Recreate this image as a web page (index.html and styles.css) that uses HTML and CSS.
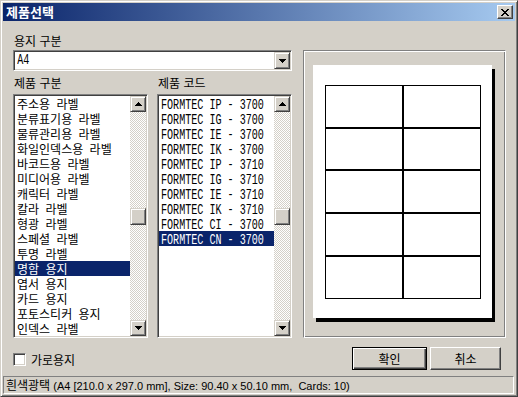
FILE: index.html
```html
<!DOCTYPE html>
<html lang="ko">
<head>
    <meta charset="UTF-8">
    <title>제품선택</title>
    <link rel="stylesheet" href="styles.css">
</head>
<body>
    <!-- 대화상자 -->
    <div class="window">
        <div class="titlebar">
            <span class="title">제품선택</span>
            <span class="close">
                <svg width="8" height="7" viewBox="0 0 8 7"><path d="M0 0h2v1h1v1h2V1h1V0h2v1H7v1H6v1H5v1h1v1h1v1h1v1H6V6H5V5H3v1H2v1H0V6h1V5h1V4h1V3H2V2H1V1H0z" fill="#000"/></svg>
            </span>
        </div>

        <div class="body">
            <div class="main">
                <!-- 왼쪽: 용지 / 제품 선택 -->
                <div class="left">
                    <div class="label">용지 구분</div>
                    <div class="combo">
                        <span class="combo-text">A4</span>
                        <span class="sbtn">
                            <svg width="7" height="4" viewBox="0 0 7 4"><path d="M0 0h7v1H6v1H5v1H4v1H3V3H2V2H1V1H0z" fill="#000"/></svg>
                        </span>
                    </div>

                    <div class="lists">
                        <div class="col">
                            <div class="label">제품 구분</div>
                            <div class="listbox">
                                <ul class="items">
                                    <li>주소용 라벨</li>
                                    <li>분류표기용 라벨</li>
                                    <li>물류관리용 라벨</li>
                                    <li>화일인덱스용 라벨</li>
                                    <li>바코드용 라벨</li>
                                    <li>미디어용 라벨</li>
                                    <li>캐릭터 라벨</li>
                                    <li>칼라 라벨</li>
                                    <li>형광 라벨</li>
                                    <li>스페셜 라벨</li>
                                    <li>투명 라벨</li>
                                    <li class="selected">명함 용지</li>
                                    <li>엽서 용지</li>
                                    <li>카드 용지</li>
                                    <li>포토스티커 용지</li>
                                    <li>인덱스 라벨</li>
                                </ul>
                                <div class="scrollbar">
                                    <span class="sbtn"><svg width="7" height="4" viewBox="0 0 7 4"><path d="M3 0h1v1h1v1h1v1h1v1H0V3h1V2h1V1h1z" fill="#000"/></svg></span>
                                    <div class="track"><span class="thumb"></span></div>
                                    <span class="sbtn"><svg width="7" height="4" viewBox="0 0 7 4"><path d="M0 0h7v1H6v1H5v1H4v1H3V3H2V2H1V1H0z" fill="#000"/></svg></span>
                                </div>
                            </div>
                        </div>

                        <div class="col">
                            <div class="label">제품 코드</div>
                            <div class="listbox">
                                <ul class="items codes">
                                    <li><span>FORMTEC IP - 3700</span></li>
                                    <li><span>FORMTEC IG - 3700</span></li>
                                    <li><span>FORMTEC IE - 3700</span></li>
                                    <li><span>FORMTEC IK - 3700</span></li>
                                    <li><span>FORMTEC IP - 3710</span></li>
                                    <li><span>FORMTEC IG - 3710</span></li>
                                    <li><span>FORMTEC IE - 3710</span></li>
                                    <li><span>FORMTEC IK - 3710</span></li>
                                    <li><span>FORMTEC CI - 3700</span></li>
                                    <li class="selected"><span>FORMTEC CN - 3700</span></li>
                                </ul>
                                <div class="scrollbar">
                                    <span class="sbtn"><svg width="7" height="4" viewBox="0 0 7 4"><path d="M3 0h1v1h1v1h1v1h1v1H0V3h1V2h1V1h1z" fill="#000"/></svg></span>
                                    <div class="track"><span class="thumb"></span></div>
                                    <span class="sbtn"><svg width="7" height="4" viewBox="0 0 7 4"><path d="M0 0h7v1H6v1H5v1H4v1H3V3H2V2H1V1H0z" fill="#000"/></svg></span>
                                </div>
                            </div>
                        </div>
                    </div>
                </div>

                <!-- 오른쪽: 미리보기 -->
                <div class="right">
                    <div class="frame">
                        <div class="paper">
                            <div class="sheet">
                                <div class="cell"></div><div class="cell"></div>
                                <div class="cell"></div><div class="cell"></div>
                                <div class="cell"></div><div class="cell"></div>
                                <div class="cell"></div><div class="cell"></div>
                                <div class="cell"></div><div class="cell"></div>
                            </div>
                        </div>
                    </div>
                </div>
            </div>

            <!-- 하단 버튼 -->
            <div class="footer">
                <label class="check"><span class="box"></span>가로용지</label>
                <div class="buttons">
                    <button class="btn default">확인</button>
                    <button class="btn cancel">취소</button>
                </div>
            </div>
        </div>

        <!-- 상태 표시줄 -->
        <div class="status"><span class="ko">흰색광택</span> (A4 [210.0 x 297.0 mm], Size: 90.40 x 50.10 mm,&nbsp; Cards: 10)</div>
    </div>
</body>
</html>
```

FILE: styles.css
```css
/* 기본 */
body {
    margin: 0;
    background-color: #d4d0c8;
    font-family: "Noto Sans CJK KR", "Liberation Sans", sans-serif;
    font-size: 12px;
    color: #000;
}

/* 창 테두리 */
.window {
    box-sizing: border-box;
    width: 518px;
    height: 397px;
    padding: 2px;
    background-color: #d4d0c8;
    border: 1px solid;
    border-color: #d4d0c8 #404040 #404040 #d4d0c8;
    box-shadow: inset 1px 1px #fff, inset -1px -1px #808080;
    display: flex;
    flex-direction: column;
}

/* 제목 표시줄 */
.titlebar {
    height: 18px;
    background: linear-gradient(90deg, #0a246a, #a6caf0);
    display: flex;
    align-items: center;
    justify-content: space-between;
}

.title {
    color: #fff;
    font-weight: bold;
    font-size: 13px;
    padding-left: 3px;
    line-height: 18px;
}

.close {
    box-sizing: border-box;
    width: 16px;
    height: 14px;
    margin-right: 2px;
    display: flex;
    align-items: center;
    justify-content: center;
    background-color: #d4d0c8;
    border: 1px solid;
    border-color: #fff #404040 #404040 #fff;
    box-shadow: inset -1px -1px #808080;
}

/* 본문 */
.body {
    flex: 1;
    padding: 12px 10px 0;
}

.main {
    display: flex;
    gap: 11px;
}

.left {
    width: 279px;
}

.label {
    height: 15px;
    line-height: 15px;
    padding-left: 1px;
}

/* 콤보박스 */
.combo {
    box-sizing: border-box;
    height: 21px;
    margin-top: 2px;
    background-color: #fff;
    border: 1px solid;
    border-color: #808080 #fff #fff #808080;
    box-shadow: inset 1px 1px #404040, inset -1px -1px #d4d0c8;
    padding: 1px;
    display: flex;
    justify-content: space-between;
}

.combo-text {
    font-family: "Liberation Mono", monospace;
    font-size: 14px;
    line-height: 17px;
    padding-left: 3px;
    display: inline-block;
    transform: scaleX(0.72);
    transform-origin: left center;
}

/* 스크롤 버튼 */
.sbtn {
    box-sizing: border-box;
    width: 16px;
    height: 17px;
    flex: none;
    display: flex;
    align-items: center;
    justify-content: center;
    background-color: #d4d0c8;
    border: 1px solid;
    border-color: #d4d0c8 #404040 #404040 #d4d0c8;
    box-shadow: inset 1px 1px #fff, inset -1px -1px #808080;
}

/* 목록 */
.lists {
    display: flex;
    gap: 9px;
    margin-top: 4px;
}

.col .label {
    margin-bottom: 4px;
}

.listbox {
    box-sizing: border-box;
    width: 135px;
    height: 244px;
    background-color: #fff;
    border: 1px solid;
    border-color: #808080 #fff #fff #808080;
    box-shadow: inset 1px 1px #404040, inset -1px -1px #d4d0c8;
    padding: 1px;
    display: flex;
}

.items {
    flex: 1;
    list-style: none;
    margin: 0;
    padding: 0;
    overflow: hidden;
}

.items li {
    height: 15px;
    line-height: 15px;
    padding-left: 2px;
    white-space: nowrap;
    word-spacing: 3px;
}

.items li.selected {
    background-color: #0a246a;
    color: #fff;
}

.codes li span {
    display: inline-block;
    font-family: "Liberation Mono", monospace;
    font-size: 14px;
    word-spacing: 0;
    transform: scaleX(0.72);
    transform-origin: left center;
}

.scrollbar {
    width: 16px;
    display: flex;
    flex-direction: column;
}

.scrollbar .sbtn {
    height: 16px;
}

.track {
    flex: 1;
    background: repeating-conic-gradient(#fff 0 25%, #d4d0c8 0 50%) 0 0 / 2px 2px;
}

.thumb {
    display: block;
    box-sizing: border-box;
    height: 17px;
    margin-top: 96px;
    background-color: #d4d0c8;
    border: 1px solid;
    border-color: #d4d0c8 #404040 #404040 #d4d0c8;
    box-shadow: inset 1px 1px #fff, inset -1px -1px #808080;
}

/* 미리보기 */
.right {
    padding-top: 17px;
}

.frame {
    box-sizing: border-box;
    width: 203px;
    height: 288px;
    border: 1px solid;
    border-color: #808080 #fff #fff #808080;
    box-shadow: inset 1px 1px #fff, inset -1px -1px #808080;
    padding: 14px 0 0 9px;
}

.paper {
    box-sizing: border-box;
    width: 179px;
    height: 253px;
    background-color: #fff;
    box-shadow: 3px 4px 0 #000;
    padding: 20px 0 0 12px;
}

.sheet {
    display: grid;
    grid-template-columns: 78px 78px;
    grid-template-rows: 43px 42px 43px 43px 43px;
}

.cell {
    border: 1px solid #000;
}

/* 하단 */
.footer {
    display: flex;
    justify-content: space-between;
    margin-top: 9px;
    height: 23px;
}

.check {
    display: flex;
    align-items: center;
    gap: 5px;
    margin-top: 6px;
    height: 13px;
}

.box {
    box-sizing: border-box;
    width: 13px;
    height: 13px;
    background-color: #fff;
    border: 1px solid;
    border-color: #808080 #fff #fff #808080;
    box-shadow: inset 1px 1px #404040, inset -1px -1px #d4d0c8;
}

.buttons {
    display: flex;
    gap: 3px;
    margin-right: 4px;
}

.btn {
    box-sizing: border-box;
    height: 23px;
    padding: 0;
    font-family: inherit;
    font-size: 12px;
    color: #000;
    background-color: #d4d0c8;
    border: 1px solid;
    border-color: #fff #404040 #404040 #fff;
    box-shadow: inset -1px -1px #808080;
}

.btn.default {
    width: 75px;
    border-color: #000;
    box-shadow: inset 1px 1px #fff, inset -1px -1px #404040, inset -2px -2px #808080;
}

.btn.cancel {
    width: 71px;
}

/* 상태 표시줄 */
.status {
    box-sizing: border-box;
    height: 18px;
    margin-right: 1px;
    border: 1px solid;
    border-color: #808080 #fff #fff #808080;
    padding-left: 2px;
    font-family: "Liberation Sans", "Noto Sans CJK KR", sans-serif;
    font-size: 11px;
    line-height: 16px;
    white-space: nowrap;
    overflow: hidden;
}

.status .ko {
    font-family: "Noto Sans CJK KR", sans-serif;
    font-size: 12px;
}
```
